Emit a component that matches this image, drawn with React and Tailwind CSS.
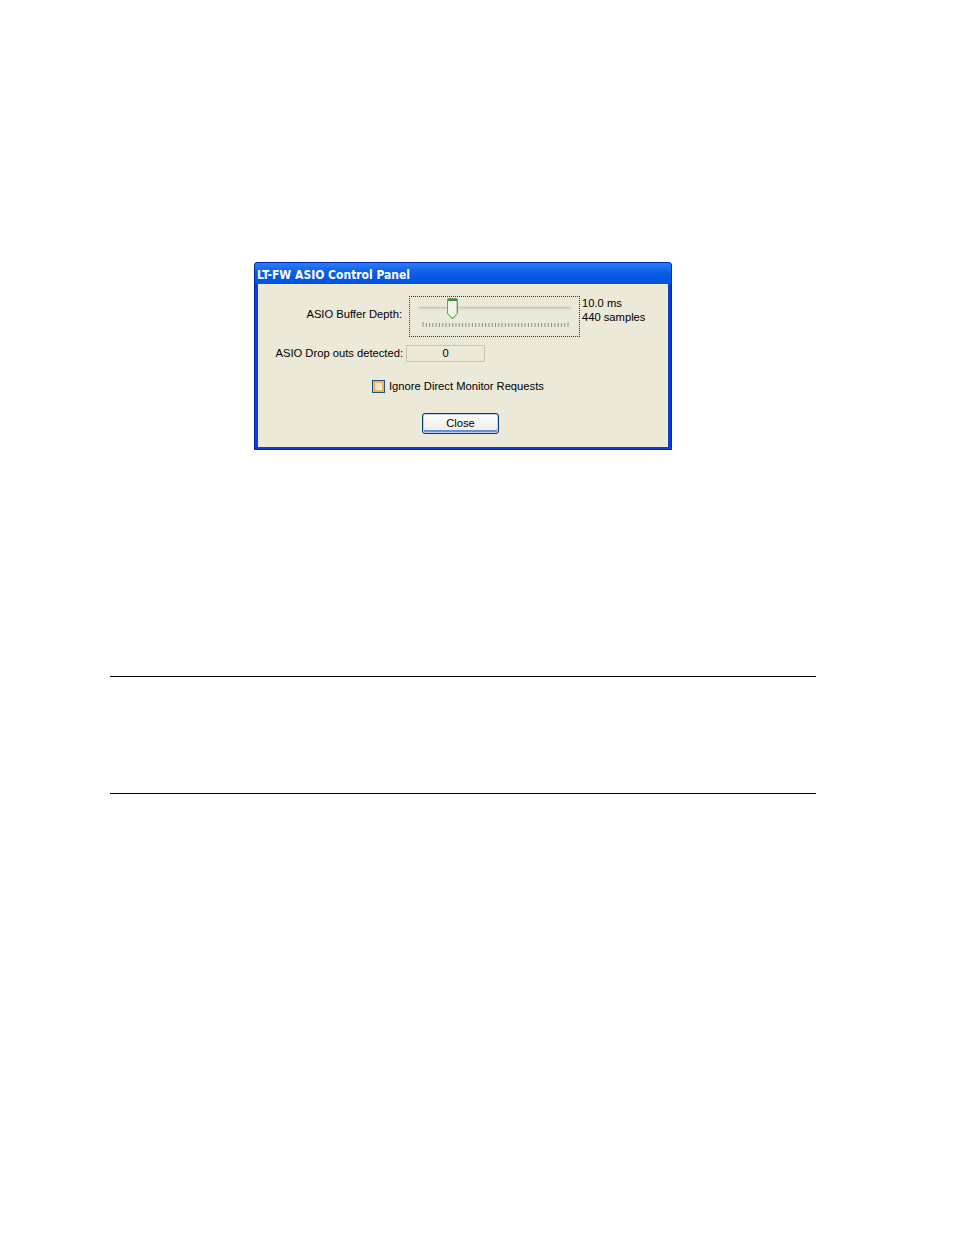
import React from "react";

function Slider() {
  const ticks = [];
  const n = 45;
  for (let i = 0; i < n; i++) {
    const x = 13 + (i * (158 - 13)) / (n - 1);
    const tall = i === 0 || i === n - 1;
    ticks.push(
      <line key={i} x1={x} x2={x} y1={tall ? 25 : 26} y2={30} stroke="#8e8e8e" strokeWidth="1" />
    );
  }
  return (
    <svg width="169" height="39" viewBox="0 0 169 39" className="block">
      <rect x="8" y="10" width="153" height="3" rx="1.5" fill="#fff" stroke="#d4d0c8" strokeWidth="1" />
      <line x1="9" x2="160" y1="11" y2="11" stroke="#a9a69a" strokeWidth="1" />
      {ticks}
      <g transform="translate(37,1)">
        <path d="M0.5 1.5 Q0.5 0.5 1.5 0.5 H9.5 Q10.5 0.5 10.5 1.5 V15.5 L5.5 21 L0.5 15.5 Z" fill="#f3f2ec" stroke="#8c8a80" />
        <rect x="1" y="1" width="9" height="2" fill="#21a121" />
        <path d="M1 15.8 L5.5 20.3 L10 15.8" fill="none" stroke="#44c244" strokeWidth="1" />
        <line x1="9.5" x2="9.5" y1="3" y2="15" stroke="#c9c6b8" />
      </g>
    </svg>
  );
}

export default function App() {
  const font = { fontFamily: '"Liberation Sans", Arial, sans-serif' };
  return (
    <div className="w-[954px] h-[1235px] bg-white" style={font}>
      <div className="pt-[262px] pl-[254px]">
        <div className="w-[418px] h-[188px] rounded-t-[3px] bg-[#0a3fd7] flex flex-col border border-[#0028b4]">
          <div className="h-[21px] bg-gradient-to-b from-[#2a7cf6] via-[#0a5ce6] to-[#0052df] rounded-t-[2px] flex items-center pl-[2px] pt-[2px]">
            <span className="text-white font-bold leading-none" style={{ fontFamily: '"DejaVu Sans Condensed", "Liberation Sans", sans-serif', fontSize: "12px" }}>
              LT-FW ASIO Control Panel
            </span>
          </div>
          <div className="flex-1 mx-[3px] mb-[2px] bg-[#ece9d8] text-[11.2px] text-black">
            <div className="flex pt-[12px]">
              <div className="w-[149px] flex justify-end items-center h-[41px] pr-[5px] pb-[5px]">
                <span>ASIO Buffer Depth:</span>
              </div>
              <div className="ml-[2px] w-[171px] h-[41px] border border-dotted border-[#333]">
                <Slider />
              </div>
              <div className="ml-[2px] leading-[14px]">
                <div>10.0 ms</div>
                <div>440 samples</div>
              </div>
            </div>
            <div className="flex items-center mt-[8px]">
              <div className="w-[148px] flex justify-end pr-[3px]">
                <span>ASIO Drop outs detected:</span>
              </div>
              <div className="w-[79px] h-[17px] border border-[#c5c2b2] bg-[#ece9d8] flex items-center justify-center leading-none">
                0
              </div>
            </div>
            <div className="flex items-center mt-[16px] ml-[114px]">
              <div className="w-[13px] h-[13px] border border-[#1c5180] bg-gradient-to-br from-[#dcdad0] to-[#f5f4ee] shadow-[inset_0_0_0_2px_#f8b347]" />
              <span className="ml-[4px]">Ignore Direct Monitor Requests</span>
            </div>
            <div className="mt-[18px] ml-[164px]">
              <div className="w-[77px] h-[21px] rounded-[3px] border border-[#003c74] bg-gradient-to-b from-[#ffffff] to-[#ecebe6] shadow-[inset_0_0_0_1px_#c0d1f0,inset_0_-2px_0_1px_#6b8fd8] flex items-center justify-center leading-none">
                Close
              </div>
            </div>
          </div>
        </div>
      </div>
      <div className="mt-[226px] ml-[110px] w-[706px] h-px bg-black" />
      <div className="mt-[116px] ml-[110px] w-[706px] h-px bg-black" />
    </div>
  );
}
